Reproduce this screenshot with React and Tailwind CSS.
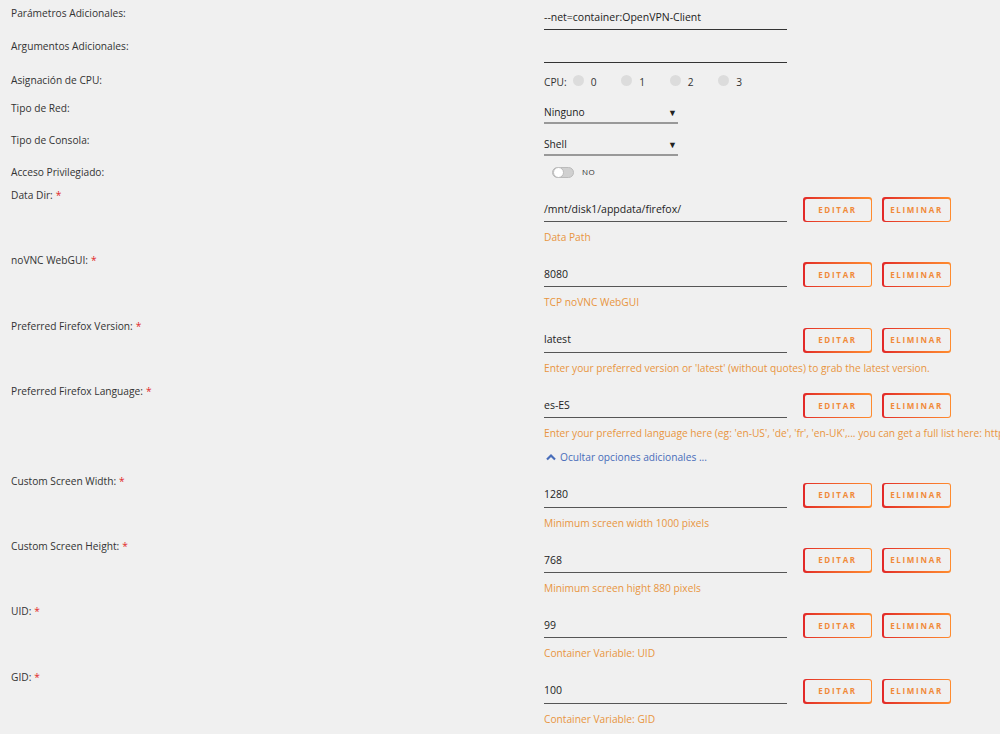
import React from "react";

const font = { fontFamily: '"Open Sans", "Noto Sans", Arial, sans-serif' };

function Req() {
  return <span className="text-[#e22828] ml-[3px]">*</span>;
}

function GradBtn({ children }) {
  return (
    <div className="rounded-[3px] bg-gradient-to-r from-[#e22828] to-[#ff8c2f] p-[1.5px]">
      <div className="flex h-[22px] w-[66px] items-center justify-center rounded-[2px] bg-[#f0f0f0] text-[8px] font-bold tracking-[1.7px] text-[#f08a3a]">
        {children}
      </div>
    </div>
  );
}

function ConfigRow({ label, value, desc, extra }) {
  return (
    <div className="flex items-start pb-[9.4px]">
      <div className="w-[544px] shrink-0 pl-[11px] leading-[14px] text-[#333]">
        {label}
        <Req />
      </div>
      <div className="flex min-w-0 flex-1 flex-col pt-[9px]">
        <div className="flex items-center">
          <div className="flex h-[25px] w-[243px] items-center border-b border-[#555] pt-[1px] text-[10.5px] text-[#222]">
            {value}
          </div>
          <div className="ml-[16px] flex gap-[10px]">
            <GradBtn>EDITAR</GradBtn>
            <GradBtn>ELIMINAR</GradBtn>
          </div>
        </div>
        <div className="mt-[8px] whitespace-nowrap leading-[14px] text-[#e8953f]">
          {desc}
        </div>
        {extra}
      </div>
    </div>
  );
}

function TextRow({ label, value }) {
  return (
    <div className="flex h-[33px] items-start">
      <div className="w-[544px] shrink-0 pl-[11px] pt-[1px] leading-[14px] text-[#333]">
        {label}
      </div>
      <div className="flex h-[25px] w-[243px] items-center border-b border-[#333] pt-[1px] text-[10.5px] text-[#222]">
        {value}
      </div>
    </div>
  );
}

function SelectRow({ label, value }) {
  return (
    <div className="flex h-[32px] items-start">
      <div className="w-[544px] shrink-0 pl-[11px] pt-[1px] leading-[14px] text-[#333]">
        {label}
      </div>
      <div className="flex h-[24px] w-[134px] items-center justify-between border-b-2 border-[#999] pr-[1px] pt-[3px] text-[#222]">
        <span>{value}</span>
        <span className="text-[9px] text-[#222]">▼</span>
      </div>
    </div>
  );
}

export default function App() {
  const cpus = ["0", "1", "2", "3"];
  return (
    <div
      className="min-h-[734px] w-[1000px] overflow-hidden bg-[#f0f0f0] pt-[5px] text-[10.2px]"
      style={font}
    >
      <TextRow label="Parámetros Adicionales:" value="--net=container:OpenVPN-Client" />
      <TextRow label="Argumentos Adicionales:" value="" />

      <div className="flex h-[29px] items-start">
        <div className="w-[544px] shrink-0 pl-[11px] pt-[2px] leading-[14px] text-[#333]">
          Asignación de CPU:
        </div>
        <div className="flex items-center pt-[4px] leading-[14px] text-[#333]">
          <span className="mr-[6px]">CPU:</span>
          {cpus.map((c) => (
            <div key={c} className="flex w-[48.5px] items-center">
              <span className="mb-[3px] h-[11px] w-[11px] rounded-full bg-[#dcdcdc]" />
              <span className="ml-[7px]">{c}</span>
            </div>
          ))}
        </div>
      </div>

      <SelectRow label="Tipo de Red:" value="Ninguno" />
      <SelectRow label="Tipo de Consola:" value="Shell" />

      <div className="flex h-[24px] items-start">
        <div className="w-[544px] shrink-0 pl-[11px] pt-[1px] leading-[14px] text-[#333]">
          Acceso Privilegiado:
        </div>
        <div className="flex items-center pt-[2px]">
          <div className="ml-[8px] flex h-[11px] w-[22px] items-center rounded-full border border-[#bbb] bg-[#d0d0d0]">
            <div className="h-[11px] w-[11px] rounded-full border border-[#bbb] bg-white" />
          </div>
          <span className="ml-[8px] text-[8px] text-[#333] tracking-[0.5px]">NO</span>
        </div>
      </div>

      <ConfigRow label="Data Dir:" value="/mnt/disk1/appdata/firefox/" desc="Data Path" />
      <ConfigRow label="noVNC WebGUI:" value="8080" desc="TCP noVNC WebGUI" />
      <ConfigRow
        label="Preferred Firefox Version:"
        value="latest"
        desc="Enter your preferred version or 'latest' (without quotes) to grab the latest version."
      />
      <ConfigRow
        label="Preferred Firefox Language:"
        value="es-ES"
        desc="Enter your preferred language here (eg: 'en-US', 'de', 'fr', 'en-UK',... you can get a full list here: https://ftp.mozilla.org/pub/firefox/releases/latest/README.txt)"
        extra={
          <div className="mt-[10px] flex items-center leading-[14px] text-[#486dba]">
            <svg width="10" height="8" viewBox="0 0 10 8" className="ml-[2px] mr-[4px]">
              <path d="M1 6.5 L5 2.5 L9 6.5" fill="none" stroke="#486dba" strokeWidth="2.2" />
            </svg>
            Ocultar opciones adicionales ...
          </div>
        }
      />
      <ConfigRow label="Custom Screen Width:" value="1280" desc="Minimum screen width 1000 pixels" />
      <ConfigRow label="Custom Screen Height:" value="768" desc="Minimum screen hight 880 pixels" />
      <ConfigRow label="UID:" value="99" desc="Container Variable: UID" />
      <ConfigRow label="GID:" value="100" desc="Container Variable: GID" />
    </div>
  );
}
